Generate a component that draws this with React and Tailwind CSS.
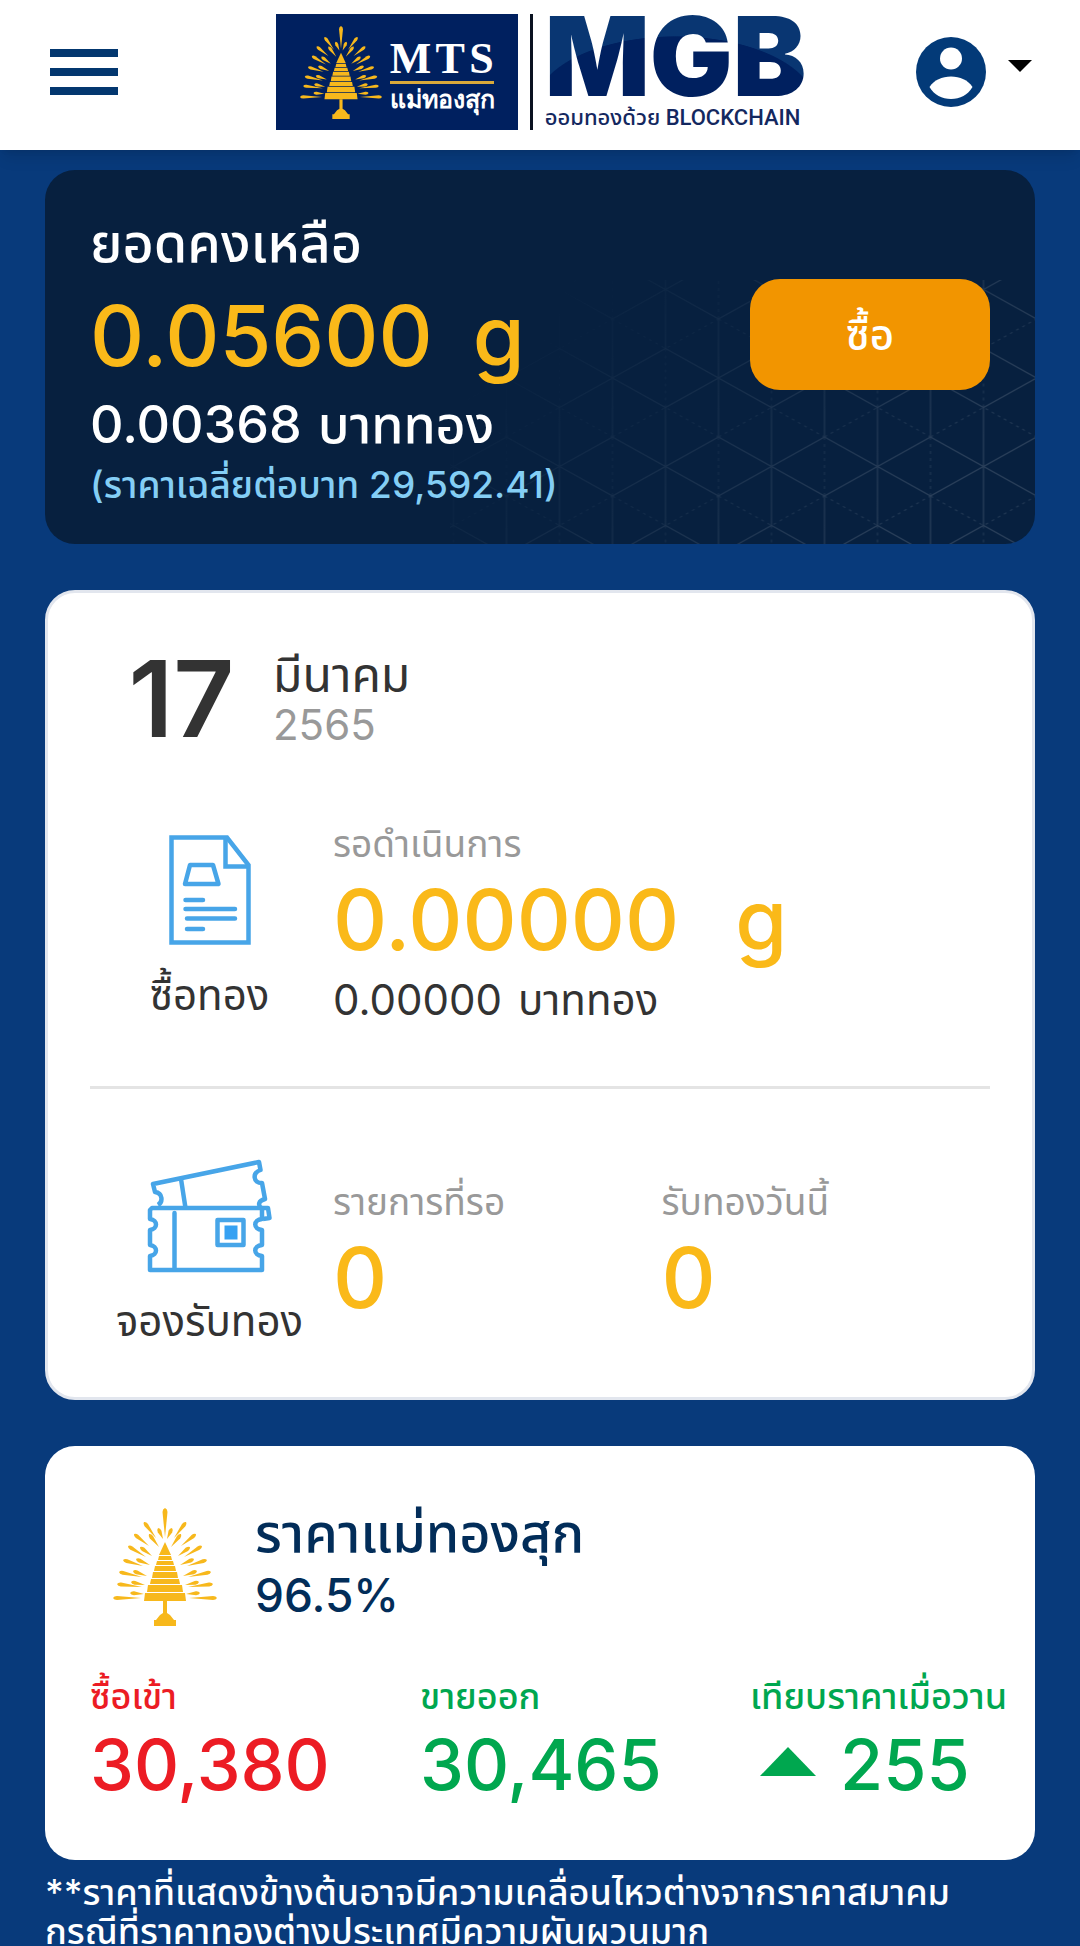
import React from "react";

// Ray coordinates of the emblem, left half only: [tipX, tipY, tailX, tailY, width]
const RAYS = [
  [31, 14, 43, 30, 4],
  [21, 26, 36, 38, 4],
  [15, 38, 33, 49, 4],
  [10, 52, 30, 58, 4],
  [6, 64, 29, 69, 4],
  [4, 76, 29, 79, 4],
  [0, 90, 28, 90, 4],
  [45, 20, 50, 31, 4],
  [36, 26, 46, 39, 4],
  [27, 39, 39, 48, 4],
  [23, 51, 37, 57, 4],
  [20, 63, 34, 68, 4],
  [18, 74, 32, 77, 4],
  [17, 85, 31, 86, 4],
];

// Tiers of the pagoda: [top, bottom, half width]
const TIERS = [
  [48, 52, 7],
  [53, 57, 9],
  [58, 63, 11],
  [64, 70, 13],
  [71, 76, 15],
  [77, 84, 18],
  [85, 93, 21],
];

/**
 * Builds a teardrop that is round at its tip and thin at its tail.
 */
const rayPath = ([x1, y1, x2, y2, w]) => {
  const len = Math.hypot(x2 - x1, y2 - y1);
  const ux = (x2 - x1) / len;
  const uy = (y2 - y1) / len;
  const mx = x1 + ux * 4;
  const my = y1 + uy * 4;
  const nx = (-uy * w) / 2;
  const ny = (ux * w) / 2;
  return `M${x1} ${y1} Q${mx + nx - ux * 3} ${my + ny - uy * 3} ${mx + nx} ${my + ny} L${x2} ${y2} L${mx - nx} ${my - ny} Q${mx - nx - ux * 3} ${my - ny - uy * 3} ${x1} ${y1}Z`;
};

const Emblem = ({ className }) => (
  <svg viewBox="0 0 104 118" className={className} fill="#f7b81c" aria-hidden="true">
    <path d={rayPath([52, 0, 52, 29, 5])} />
    {RAYS.map((ray) => (
      <g key={ray.join("-")}>
        <path d={rayPath(ray)} />
        <path d={rayPath(ray)} transform="translate(104 0) scale(-1 1)" />
      </g>
    ))}
    <path d="M52 34 L58 47 H46Z" />
    {TIERS.map(([top, bottom, half]) => (
      <path
        key={top}
        d={`M${52 - half + 1} ${top} H${52 + half - 1} L${52 + half} ${bottom} H${52 - half}Z`}
      />
    ))}
    <path d="M50 93 H54 V105 L57 107 L61 112 H63 V118 H41 V112 H43 L47 107 L50 105Z" />
  </svg>
);

const UserIcon = () => (
  <svg viewBox="0 0 70 70" className="h-[70px] w-[70px]" aria-hidden="true">
    <circle cx="35" cy="35" r="35" fill="#033a78" />
    <circle cx="35" cy="21.5" r="11" fill="#fff" />
    <path d="M13.5 50 C18 43 26 39.5 35 39.5 S52 43 56.5 50 C52 58 44 62 35 62 S18 58 13.5 50Z" fill="#fff" />
  </svg>
);

const DocumentIcon = () => (
  <svg
    viewBox="0 0 82 110"
    className="h-[110px] w-[82px]"
    fill="none"
    stroke="#47a5e8"
    strokeWidth="4.5"
    aria-hidden="true"
  >
    <path d="M2.5 2.5 H58 L79.5 30 V107.5 H2.5Z" />
    <path d="M56.5 3 V31.5 H79" />
    <path d="M21 30 H44 L49.5 49 H16Z" strokeLinejoin="round" />
    <path d="M16.5 65 H34 M16.5 74 H66 M18 83.5 H66 M18 94 H34" strokeLinecap="round" />
  </svg>
);

const TicketIcon = () => (
  <svg
    viewBox="0 0 125 114"
    className="h-[114px] w-[125px]"
    fill="none"
    stroke="#47a5e8"
    strokeWidth="4.5"
    strokeLinejoin="round"
    aria-hidden="true"
  >
    <path d="M11 46 C16 43 16 34 8 33 L6 25 L112 3 L113.5 11 C105 14 106 24 115 24 L118 40 C111 42 111 46 114 49 H121 L122.5 59 L116 60" />
    <path d="M34 20 L38.5 49" />
    <path d="M5 49 H115 V60 C106 61 106 70 115 71 V86 C106 87 106 96 115 97 V111 H3 V97 C11 96 11 87 3 86 V71 C11 70 11 61 3 60 V51Z" />
    <path d="M27.5 54 V110" strokeLinecap="round" />
    <rect x="70.5" y="61" width="26" height="25" />
    <rect x="77.5" y="66.5" width="13" height="14" fill="#36a1f2" stroke="none" />
  </svg>
);

/**
 * Faint cube lattice in the corner of the balance card.
 */
const CubePattern = () => (
  <svg
    viewBox="0 0 585 264"
    className="pointer-events-none absolute right-0 bottom-0 h-[264px] w-[585px]"
    aria-hidden="true"
  >
    <defs>
      <pattern id="cubes" x="480.5" y="157" width="106" height="177" patternUnits="userSpaceOnUse">
        <g fill="none" stroke="#fff" strokeWidth="1.2">
          <path d="M0 59 V177 M106 59 V177 M53 147.5 V177 M53 0 V88.5" />
          <path d="M0 0 L53 29.5 L106 0 M0 59 L53 29.5 L106 59" />
          <path d="M0 118 L53 88.5 L106 118 M0 118 L53 147.5 L106 118" />
          <path
            strokeDasharray="3 4"
            opacity="0.7"
            d="M0 0 V59 M106 0 V59 M53 88.5 V147.5 M0 59 L53 88.5 L106 59 M0 177 L53 147.5 L106 177"
          />
        </g>
      </pattern>
      <linearGradient id="cubeFade" x1="0" y1="0" x2="1" y2="0.4">
        <stop offset="0.15" stopColor="#fff" stopOpacity="0" />
        <stop offset="1" stopColor="#fff" stopOpacity="0.15" />
      </linearGradient>
      <mask id="cubeMask">
        <rect width="585" height="264" fill="url(#cubeFade)" />
      </mask>
    </defs>
    <rect width="585" height="264" fill="url(#cubes)" mask="url(#cubeMask)" />
  </svg>
);

const Header = () => (
  <header className="relative flex h-[150px] items-center justify-between bg-white pr-12 pb-[14px] pl-[50px] shadow-lg">
    <button type="button" aria-label="เมนู" className="mt-2 flex w-[68px] flex-col gap-[11px]">
      <span className="h-2 bg-[#03376f]" />
      <span className="h-2 bg-[#03376f]" />
      <span className="h-2 bg-[#03376f]" />
    </button>

    <a href="#home" className="ml-12 flex items-end">
      <div className="flex h-[116px] w-[242px] items-center bg-[#00205f] px-6">
        <Emblem className="h-[93px] w-[82px] shrink-0" />
        <div className="ml-2 flex w-[104px] shrink-0 flex-col pt-2 font-['Liberation_Serif',serif] font-bold text-white">
          <div className="flex justify-between text-[44px] leading-[44px]">
            <span>M</span>
            <span>T</span>
            <span>S</span>
          </div>
          <span className="h-[3px] bg-[#d9a93a]" />
          <span className="text-[25px] leading-8 whitespace-nowrap">แม่ทองสุก</span>
        </div>
      </div>
      <span className="ml-3 h-[116px] w-[3px] bg-[#0a1220]" />
      <div className="ml-3 flex flex-col">
        <span className="bg-[radial-gradient(ellipse_54%_70%_at_50%_100%,#00205f_99%,#093672_100%)] bg-clip-text text-[110px] leading-[100px] font-black text-transparent">
          MGB
        </span>
        <span className="font-['Roboto','Noto_Sans_Thai',sans-serif] text-[22px] leading-6 font-medium whitespace-nowrap text-[#14285f]">
          ออมทองด้วย BLOCKCHAIN
        </span>
      </div>
    </a>

    <button type="button" aria-label="บัญชีผู้ใช้" className="mt-2 flex items-center gap-[22px]">
      <UserIcon />
      <svg viewBox="0 0 24 12" className="mb-3 h-3 w-6" aria-hidden="true">
        <path d="M0 0 H24 L12 12Z" />
      </svg>
    </button>
  </header>
);

/**
 * A number followed by its unit.
 */
const Amount = ({ value, unit, className }) => (
  <p className={`flex whitespace-nowrap ${className}`}>
    <span>{value}</span>
    <span>{unit}</span>
  </p>
);

const BalanceCard = () => (
  <section className="relative flex justify-between overflow-hidden rounded-[30px] bg-[#07203f] px-[45px] pt-[33px] pb-[35px] font-medium text-white">
    <CubePattern />
    <div>
      <h2 className="text-[54px] leading-[80px]">ยอดคงเหลือ</h2>
      <Amount value="0.05600" unit="g" className="gap-10 text-[84px] leading-[106px] text-[#fab919]" />
      <Amount value="0.00368" unit="บาททอง" className="gap-4 text-[52px] leading-[72px]" />
      <p className="text-[37px] leading-[48px] text-[#84cef5]">(ราคาเฉลี่ยต่อบาท 29,592.41)</p>
    </div>
    <button
      type="button"
      className="relative mt-[76px] h-[111px] w-[240px] rounded-[30px] bg-[#f29500] text-[42px]"
    >
      ซื้อ
    </button>
  </section>
);

const OrdersCard = () => (
  <section className="rounded-[30px] border-[3px] border-[#e2e6ee] bg-white px-[42px] pt-[52px] pb-[46px] text-[#333333]">
    <div className="flex">
      <span className="w-[183px] text-center text-[106px] leading-[108px] font-semibold">17</span>
      <div>
        <p className="text-[48px] leading-[60px]">มีนาคม</p>
        <p className="text-[42px] leading-10 text-[#999999]">2565</p>
      </div>
    </div>

    <div className="mt-[67px] grid grid-cols-[243px_1fr] border-b-[3px] border-[#e4e4e4] pb-[58px]">
      <div className="flex flex-col items-center gap-5 pt-[15px] pr-1">
        <DocumentIcon />
        <p className="text-[42px] leading-[60px]">ซื้อทอง</p>
      </div>
      <div>
        <p className="text-[37px] leading-[48px] text-[#999999]">รอดำเนินการ</p>
        <Amount value="0.00000" unit="g" className="gap-14 text-[84px] leading-[104px] font-medium text-[#fab919]" />
        <Amount value="0.00000" unit="บาททอง" className="gap-4 text-[42px] leading-[56px]" />
      </div>
    </div>

    <div className="mt-[70px] grid grid-cols-[243px_1fr_1fr]">
      <div className="flex flex-col items-center gap-[18px] pr-1">
        <TicketIcon />
        <p className="text-[42px] leading-[60px] whitespace-nowrap">จองรับทอง</p>
      </div>
      <div className="pt-[19px]">
        <p className="text-[37px] leading-[48px] text-[#999999]">รายการที่รอ</p>
        <p className="text-[84px] leading-[104px] font-medium text-[#fab919]">0</p>
      </div>
      <div className="pt-[19px]">
        <p className="text-[37px] leading-[48px] text-[#999999]">รับทองวันนี้</p>
        <p className="text-[84px] leading-[104px] font-medium text-[#fab919]">0</p>
      </div>
    </div>
  </section>
);

const PriceCard = () => (
  <section className="rounded-[30px] bg-white pt-[56px] pb-[50px] font-medium">
    <div className="flex pl-[68px]">
      <Emblem className="mt-[6px] h-[118px] w-[104px]" />
      <div className="ml-[38px] text-[#022d59]">
        <h2 className="text-[54px] leading-[62px]">ราคาแม่ทองสุก</h2>
        <p className="text-[46px] leading-[62px]">96.5%</p>
      </div>
    </div>
    <div className="mt-[46px] grid grid-cols-3 whitespace-nowrap text-[#00a74f]">
      <div className="pl-[45px] text-[#ec1c24]">
        <p className="text-[36px] leading-[48px]">ซื้อเข้า</p>
        <p className="text-[70px] leading-[90px]">30,380</p>
      </div>
      <div className="pl-[45px]">
        <p className="text-[36px] leading-[48px]">ขายออก</p>
        <p className="text-[70px] leading-[90px]">30,465</p>
      </div>
      <div className="pl-[45px]">
        <p className="text-[36px] leading-[48px]">เทียบราคาเมื่อวาน</p>
        <p className="flex items-center gap-6 pl-[10px] text-[70px] leading-[90px]">
          <svg viewBox="0 0 56 29" className="mb-2 h-[29px] w-14" fill="#00a74f" aria-hidden="true">
            <path d="M28 0 L56 29 H0Z" />
          </svg>
          255
        </p>
      </div>
    </div>
  </section>
);

export default function App() {
  return (
    <div className="min-h-screen bg-[#083a7b] font-['Inter','Noto_Sans_Thai','Noto_Sans',sans-serif]">
      <Header />
      <main className="px-[45px] pt-5">
        <BalanceCard />
        <div className="mt-[46px]">
          <OrdersCard />
        </div>
        <div className="mt-[46px]">
          <PriceCard />
        </div>
        <p className="mt-[13px] text-[36px] leading-[39px] font-medium text-white">
          **ราคาที่แสดงข้างต้นอาจมีความเคลื่อนไหวต่างจากราคาสมาคม
          <br />
          กรณีที่ราคาทองต่างประเทศมีความผันผวนมาก
        </p>
      </main>
    </div>
  );
}
